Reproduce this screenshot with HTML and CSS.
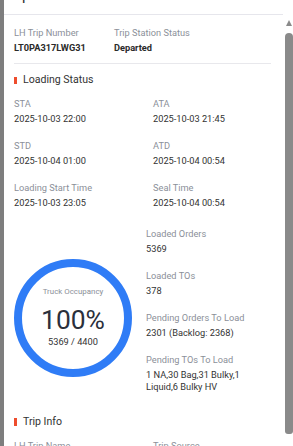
FILE: index.html
```html
<!DOCTYPE html>
<html>
<head>
<meta charset="utf-8">
<link rel="stylesheet" href="styles.css">
</head>
<body>
<div class="panel">
  <div class="main">
    <div class="header"><span class="title">Trip Details</span></div>
    <div class="content">
      <div class="summary">
        <div class="field w100">
          <div class="label">LH Trip Number</div>
          <div class="value strong">LT0PA317LWG31</div>
        </div>
        <div class="field">
          <div class="label">Trip Station Status</div>
          <div class="value strong">Departed</div>
        </div>
      </div>
      <div class="divider"></div>

      <div class="section-title">Loading Status</div>
      <div class="grid2">
        <div class="field">
          <div class="label">STA</div>
          <div class="value">2025-10-03 22:00</div>
        </div>
        <div class="field">
          <div class="label">ATA</div>
          <div class="value">2025-10-03 21:45</div>
        </div>
        <div class="field">
          <div class="label">STD</div>
          <div class="value">2025-10-04 01:00</div>
        </div>
        <div class="field">
          <div class="label">ATD</div>
          <div class="value">2025-10-04 00:54</div>
        </div>
        <div class="field">
          <div class="label">Loading Start Time</div>
          <div class="value">2025-10-03 23:05</div>
        </div>
        <div class="field">
          <div class="label">Seal Time</div>
          <div class="value">2025-10-04 00:54</div>
        </div>
      </div>

      <div class="occupancy">
        <div class="gauge-col">
          <div class="gauge">
            <div class="gauge-label">Truck Occupancy</div>
            <div class="gauge-pct">100%</div>
            <div class="gauge-ratio">5369 / 4400</div>
          </div>
        </div>
        <div class="stats">
          <div class="field">
            <div class="label">Loaded Orders</div>
            <div class="value">5369</div>
          </div>
          <div class="field">
            <div class="label">Loaded TOs</div>
            <div class="value">378</div>
          </div>
          <div class="field">
            <div class="label">Pending Orders To Load</div>
            <div class="value">2301 (Backlog: 2368)</div>
          </div>
          <div class="field">
            <div class="label">Pending TOs To Load</div>
            <div class="value">1 NA,30 Bag,31 Bulky,1 Liquid,6 Bulky HV</div>
          </div>
        </div>
      </div>

      <div class="section-title trip-info">Trip Info</div>
      <div class="grid2">
        <div class="field">
          <div class="label">LH Trip Name</div>
          <div class="value">-</div>
        </div>
        <div class="field">
          <div class="label">Trip Source</div>
          <div class="value">-</div>
        </div>
      </div>
    </div>
  </div>
  <div class="scrollbar">
    <div class="arrow"></div>
    <div class="thumb"></div>
  </div>
</div>
</body>
</html>
```

FILE: styles.css
```css
* { box-sizing: border-box; }

html, body {
  margin: 0;
  padding: 0;
  height: 446px;
  overflow: hidden;
}

body {
  background: #7e7e7e;
  font-family: Roboto, "Liberation Sans", Arial, sans-serif;
  color: #333;
}

.panel {
  margin-left: 4px;
  width: 289px;
  height: 446px;
  background: #fff;
  display: flex;
  overflow: hidden;
}

.main {
  width: 279px;
  flex: none;
}

.header {
  height: 15px;
  border-bottom: 1px solid #e6e6ec;
  overflow: hidden;
  position: relative;
}

.title {
  display: block;
  font-size: 12px;
  line-height: 14px;
  margin-top: -11px;
  padding-left: 4px;
  color: #333;
  font-weight: 500;
}

.content {
  padding: 12px 12px 0 10px;
}

.summary {
  display: flex;
}

.w100 { width: 100px; flex: none; }

.field { min-width: 0; }

.label {
  font-size: 9.24px;
  line-height: 11.5px;
  color: #8b9099;
  margin-bottom: 3.5px;
  white-space: nowrap;
}

.value {
  font-size: 9.24px;
  line-height: 11.5px;
  color: #333;
}

.value.strong {
  font-weight: 700;
  color: #2a2a2a;
}

.divider {
  height: 1px;
  background: #e8e8ec;
  margin-top: 9.5px;
}

.section-title {
  margin-top: 9.3px;
  font-size: 10.56px;
  line-height: 14px;
  color: #333;
  display: flex;
  align-items: center;
  gap: 6px;
}

.section-title::before {
  content: "";
  width: 3px;
  height: 7.5px;
  background: #ee4d2d;
  flex: none;
}

.trip-info {
  margin-top: 22.6px;
}

.grid2 {
  margin-top: 11px;
  display: grid;
  grid-template-columns: 139px 1fr;
  row-gap: 15.5px;
}

.occupancy {
  margin-top: 19.5px;
  display: flex;
}

.gauge-col {
  width: 132px;
  flex: none;
  padding-top: 30.6px;
}

.gauge {
  width: 118px;
  height: 118px;
  border: 8px solid #2f7cf6;
  border-radius: 50%;
  display: flex;
  flex-direction: column;
  align-items: center;
  justify-content: center;
}

.gauge-label {
  font-size: 7.92px;
  line-height: 10px;
  color: #8b9099;
}

.gauge-pct {
  margin-top: 9px;
  font-size: 26.4px;
  line-height: 28px;
  color: #2b303b;
}

.gauge-ratio {
  margin-top: 2px;
  font-size: 9.24px;
  line-height: 12px;
  color: #333;
}

.stats {
  flex: 1;
  display: flex;
  flex-direction: column;
  gap: 15.5px;
  padding-right: 4px;
}

.scrollbar {
  width: 10px;
  flex: none;
  display: flex;
  flex-direction: column;
  align-items: flex-end;
  padding-top: 20px;
}

.arrow {
  width: 0;
  height: 0;
  border-left: 3.5px solid transparent;
  border-right: 3.5px solid transparent;
  border-bottom: 6px solid #8a8a8a;
  margin-right: 1px;
}

.thumb {
  margin-top: 7px;
  width: 8px;
  height: 401px;
  background: #8a8a8a;
  border-radius: 4px 4px 3px 3px;
}
```
